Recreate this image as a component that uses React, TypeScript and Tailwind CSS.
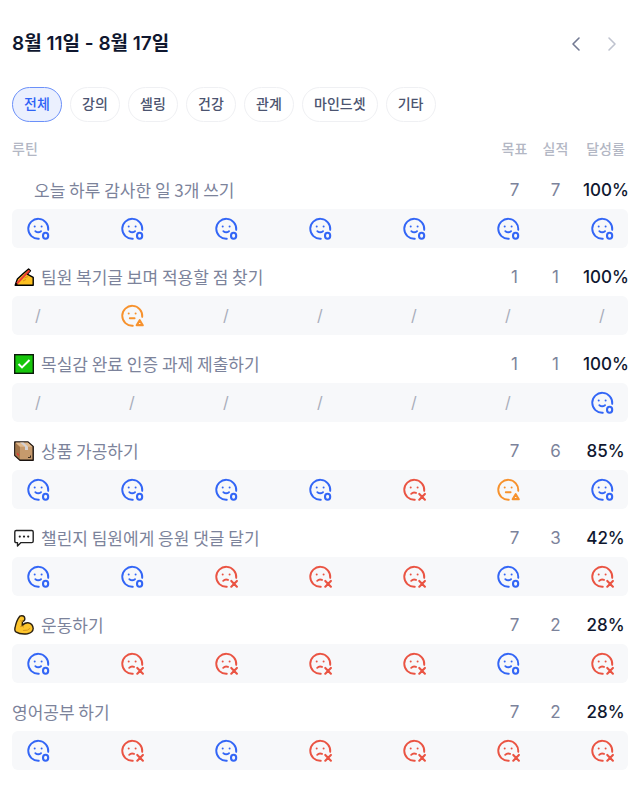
import { Fragment } from 'react';
import type { ReactNode } from 'react';
import { ChevronLeft, ChevronRight } from 'lucide-react';

type Mark = 'good' | 'soso' | 'bad' | 'none';

type Routine = {
    name: string;
    icon?: ReactNode;
    indent?: boolean;
    goal: number;
    actual: number;
    rate: string;
    marks: Mark[];
};

const categories = ['전체', '강의', '셀링', '건강', '관계', '마인드셋', '기타'];

const WritingHand = () => (
    <svg className="size-5" viewBox="0 0 20 20" fill="none" aria-hidden="true">
        <path d="M1.2 18.2 L3.4 12 L9 6.8 L14.6 2 L16.4 3.8 L13.2 7.2 L19.2 10.4 V18.2 Z" fill="#fcc021" stroke="#000" strokeWidth="1.4" strokeLinejoin="round" />
        <path d="M10.5 11 L14 9.5 M9 14 L12 12.5" stroke="#d98c1b" strokeWidth="1" />
        <path d="M2.5 17 L15.4 3.4" stroke="#ec3a32" strokeWidth="2" />
        <path d="M1 18.6 L2 15.6 L4 17.4 Z" fill="#000" />
    </svg>
);

const CheckBox = () => (
    <svg className="size-5" viewBox="0 0 20 20" fill="none" aria-hidden="true">
        <rect x=".7" y=".7" width="18.6" height="18.6" fill="#16c60c" stroke="#0b1a0a" strokeWidth="1.4" />
        <path d="M4.5 10 L8 13.4 L15.5 6" stroke="#fff" strokeWidth="2" />
    </svg>
);

const Package = () => (
    <svg className="size-5" viewBox="0 0 20 20" aria-hidden="true">
        <path d="M.8 1 H14 L19.2 5.6 V19.2 H6 L.8 14.5 Z" fill="#c69a6d" stroke="#1c1410" strokeWidth="1.4" strokeLinejoin="round" />
        <path d="M1.5 1.7 L6 5.8 V18.5 L1.5 14.2 Z" fill="#a17448" />
        <path d="M1.5 1.6 H13.8 L18.5 5.8 H6 Z" fill="#e0b98d" />
        <path d="M6 1.6 H9.5 L14 5.8 V9 H11 V5.8 Z" fill="#d5d2d4" />
        <path d="M3 11.5 L5 13.2 V15 L3 13.4 Z" fill="#e63c33" />
        <path d="M14 16.5 H16 M16.5 14.5 V16.8" stroke="#3d2c1e" strokeWidth="1" />
    </svg>
);

const SpeechBubble = () => (
    <svg className="size-5" viewBox="0 0 20 20" fill="none" aria-hidden="true">
        <path d="M2.2 2.5 H17.8 Q19.2 2.5 19.2 3.9 V13.2 Q19.2 14.6 17.8 14.6 H7 L3.5 18 V14.6 H2.2 Q.8 14.6 .8 13.2 V3.9 Q.8 2.5 2.2 2.5 Z" fill="#fff" stroke="#222" strokeWidth="1.4" strokeLinejoin="round" />
        <g fill="#222">
            <circle cx="5.8" cy="8.6" r="1.1" />
            <circle cx="10" cy="8.6" r="1.1" />
            <circle cx="14.2" cy="8.6" r="1.1" />
        </g>
    </svg>
);

const Biceps = () => (
    <svg className="size-5" viewBox="0 0 20 20" fill="none" aria-hidden="true">
        <path d="M5.8 1.2 Q7.5 .4 9.3 1 Q11 1.8 10.8 4 Q10.8 6 8.5 6.5 L8.2 10.6 Q10.5 7.5 14 7.7 Q18.8 8.4 19.2 13.5 Q19 17.5 13.5 18.8 Q6 19.6 1.8 16.8 Q.4 15.6 1 13 Q2.4 5.2 5.8 1.2 Z" fill="#fdc52d" stroke="#2b2011" strokeWidth="1.4" strokeLinejoin="round" />
        <path d="M6.5 11.5 Q8.5 10 9.8 12 M9.5 15.5 Q14 16 16 13.5 M6.5 5.8 L8.5 6.5" stroke="#d3901b" strokeWidth=".9" strokeLinecap="round" />
    </svg>
);

const routines: Routine[] = [
    {
        name: '오늘 하루 감사한 일 3개 쓰기',
        indent: true,
        goal: 7,
        actual: 7,
        rate: '100%',
        marks: ['good', 'good', 'good', 'good', 'good', 'good', 'good'],
    },
    {
        name: '팀원 복기글 보며 적용할 점 찾기',
        icon: <WritingHand />,
        goal: 1,
        actual: 1,
        rate: '100%',
        marks: ['none', 'soso', 'none', 'none', 'none', 'none', 'none'],
    },
    {
        name: '목실감 완료 인증 과제 제출하기',
        icon: <CheckBox />,
        goal: 1,
        actual: 1,
        rate: '100%',
        marks: ['none', 'none', 'none', 'none', 'none', 'none', 'good'],
    },
    {
        name: '상품 가공하기',
        icon: <Package />,
        goal: 7,
        actual: 6,
        rate: '85%',
        marks: ['good', 'good', 'good', 'good', 'bad', 'soso', 'good'],
    },
    {
        name: '챌린지 팀원에게 응원 댓글 달기',
        icon: <SpeechBubble />,
        goal: 7,
        actual: 3,
        rate: '42%',
        marks: ['good', 'good', 'bad', 'bad', 'bad', 'good', 'bad'],
    },
    {
        name: '운동하기',
        icon: <Biceps />,
        goal: 7,
        actual: 2,
        rate: '28%',
        marks: ['good', 'bad', 'bad', 'bad', 'bad', 'good', 'bad'],
    },
    {
        name: '영어공부 하기',
        goal: 7,
        actual: 2,
        rate: '28%',
        marks: ['good', 'bad', 'good', 'bad', 'bad', 'bad', 'bad'],
    },
];

const markColors = {
    good: 'text-[#3366f6]',
    soso: 'text-[#f7922d]',
    bad: 'text-[#ea5443]',
};

const MarkIcon = ({ mark }: { mark: Mark }) => {
    if (mark === 'none') {
        return <span className="w-6 pb-0.5 text-center text-base text-[#a9adbb]">/</span>;
    }

    return (
        <svg
            className={`size-6 ${markColors[mark]}`}
            viewBox="0 0 24 24"
            fill="none"
            stroke="currentColor"
            strokeWidth="1.9"
            strokeLinecap="round"
            aria-hidden="true"
        >
            <path d="M12.8 21.8 A10 10 0 1 1 22.2 12.8" />
            <g fill="currentColor" stroke="none">
                <circle cx="8.7" cy="9.6" r="1" />
                <circle cx="15.6" cy="9.6" r="1" />
            </g>
            {mark === 'good' && (
                <>
                    <path d="M9.4 14.2 Q12.2 16.4 15 14.2" />
                    <ellipse cx="19.6" cy="18.7" rx="2.6" ry="3" strokeWidth="2.1" />
                </>
            )}
            {mark === 'soso' && (
                <>
                    <path d="M9.8 14.3 H14.6" />
                    <path d="M19.7 16.2 L22.7 21.2 H16.7 Z" strokeWidth="2.2" strokeLinejoin="round" />
                </>
            )}
            {mark === 'bad' && (
                <>
                    <path d="M9.2 15.8 Q11.4 13.6 14 14.9" />
                    <path d="M17.3 15.9 L22.9 21.7 M22.9 15.9 L17.3 21.7" strokeWidth="2.1" />
                </>
            )}
        </svg>
    );
};

const App: React.FC = () => {
    return (
        <main className="bg-white px-3 pt-7 pb-9 font-['Inter','Noto_Sans_CJK_KR',sans-serif] text-[#0f172f]">
            <header className="flex items-center justify-between">
                <h1 className="text-[19px] leading-[31px] font-semibold">8월 11일 - 8월 17일</h1>
                <div className="flex gap-3 pr-1">
                    <button type="button" aria-label="이전 주" className="text-[#737a93]">
                        <ChevronLeft size={24} strokeWidth={1.6} />
                    </button>
                    <button type="button" aria-label="다음 주" className="text-[#bfc3cf]">
                        <ChevronRight size={24} strokeWidth={1.6} />
                    </button>
                </div>
            </header>

            <div className="mt-7 flex flex-wrap gap-2">
                {categories.map((category, i) => (
                    <button
                        key={category}
                        type="button"
                        aria-pressed={i === 0}
                        className={`h-[35px] min-w-[50px] rounded-full border px-[11px] pb-0.5 text-sm font-medium ${
                            i === 0
                                ? 'border-[#6b90f9] bg-[#ebf0fe] text-[#2f63f6]'
                                : 'border-[#eff0f3] bg-white text-[#4b5470]'
                        }`}
                    >
                        {category}
                    </button>
                ))}
            </div>

            <table className="mt-[15px] w-full table-fixed border-collapse">
                <thead>
                    <tr className="text-sm leading-6 text-[#b3b7c4]">
                        <th scope="col" className="p-0 text-left font-medium">루틴</th>
                        <th scope="col" className="w-[41px] p-0 font-medium">목표</th>
                        <th scope="col" className="w-[41px] p-0 font-medium">실적</th>
                        <th scope="col" className="w-[52px] p-0 pl-[7px] font-medium">달성률</th>
                    </tr>
                </thead>
                <tbody>
                    {routines.map((routine) => (
                        <Fragment key={routine.name}>
                            <tr className="text-[17px] leading-6 text-[#7c839b]">
                                <th scope="row" className="p-0 pt-[17px] text-left font-normal">
                                    <div
                                        className={`flex items-center gap-[7px] font-['Noto_Sans_CJK_KR',sans-serif] ${
                                            routine.indent ? 'pl-[22px]' : routine.icon ? 'pl-[2px]' : ''
                                        }`}
                                    >
                                        {routine.icon}
                                        <span>{routine.name}</span>
                                    </div>
                                </th>
                                <td className="p-0 pt-[17px] text-center">{routine.goal}</td>
                                <td className="p-0 pt-[17px] text-center">{routine.actual}</td>
                                <td className="p-0 pt-[17px] pl-[7px] text-center font-medium text-[#0f172f]">
                                    {routine.rate}
                                </td>
                            </tr>
                            <tr>
                                <td colSpan={4} className="p-0 pt-[7px]">
                                    <div className="flex h-[39px] items-center justify-between rounded-md bg-[#f7f8fa] px-[14px]">
                                        {routine.marks.map((mark, day) => (
                                            <MarkIcon key={day} mark={mark} />
                                        ))}
                                    </div>
                                </td>
                            </tr>
                        </Fragment>
                    ))}
                </tbody>
            </table>
        </main>
    );
};

export default App;
